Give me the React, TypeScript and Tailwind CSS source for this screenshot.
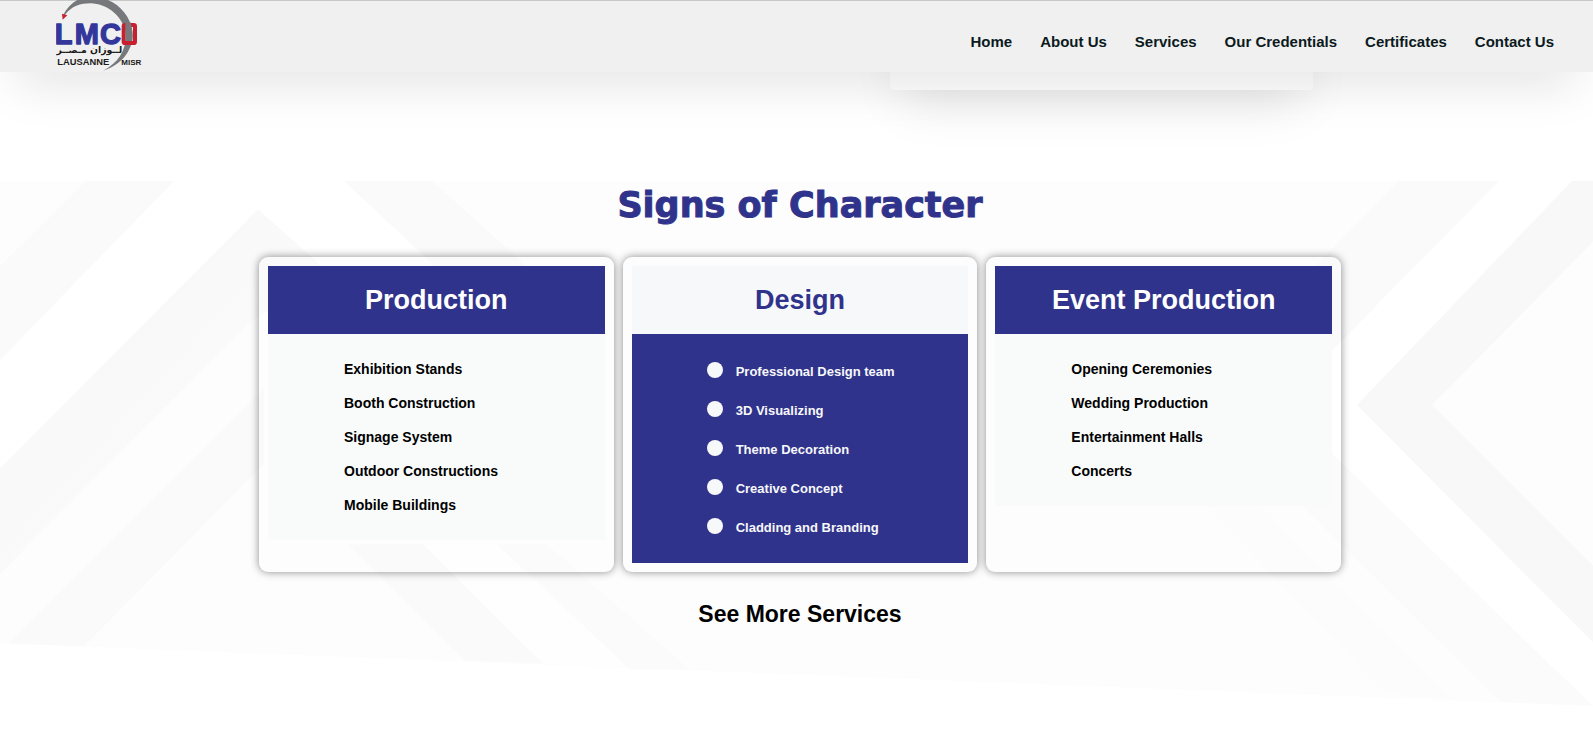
import clsx from "clsx";

type Service = {
  title: string;
  items: string[];
  highlighted?: boolean;
};

const navLinks = [
  "Home",
  "About Us",
  "Services",
  "Our Credentials",
  "Certificates",
  "Contact Us",
];

const services: Service[] = [
  {
    title: "Production",
    items: [
      "Exhibition Stands",
      "Booth Construction",
      "Signage System",
      "Outdoor Constructions",
      "Mobile Buildings",
    ],
  },
  {
    title: "Design",
    highlighted: true,
    items: [
      "Professional Design team",
      "3D Visualizing",
      "Theme Decoration",
      "Creative Concept",
      "Cladding and Branding",
    ],
  },
  {
    title: "Event Production",
    items: [
      "Opening Ceremonies",
      "Wedding Production",
      "Entertainment Halls",
      "Concerts",
    ],
  },
];

function Logo() {
  return (
    <svg
      viewBox="48 0 264 216"
      className="h-[72px] w-[88px]"
      role="img"
      aria-label="LMCO Lausanne Misr"
    >
      <g
        fill="#33379b"
        stroke="#33379b"
        strokeWidth="4"
        strokeLinejoin="round"
        fontFamily="'Liberation Sans', Arial, sans-serif"
        fontWeight="700"
        fontSize="87"
      >
        <text x="44" y="132">L</text>
        <text x="104" y="132">M</text>
        <text x="180" y="132">C</text>
      </g>
      <path
        d="M74 46 C94 18 122 10 152 10 C200 12 240 42 256 90 C264 140 240 186 190 212 C246 194 284 146 277 92 C268 34 216 -10 154 -10 C116 -10 86 12 70 44 Z"
        fill="#77787b"
      />
      <rect
        x="251"
        y="75"
        width="34"
        height="54"
        rx="4"
        fill="none"
        stroke="#c8202f"
        strokeWidth="12"
      />
      <path d="M256 66 H271 Q279 92 277 123 H257 Z" fill="#77787b" />
      <path d="M66 41 L82 46 L68 59 Z" fill="#c8202f" />
      <text
        x="148"
        y="159"
        textAnchor="middle"
        fontSize="28"
        fontWeight="700"
        fontFamily="'DejaVu Sans', sans-serif"
        fill="#1b1b1b"
      >
        لــوزان مـصــر
      </text>
      <g
        fontFamily="'Liberation Sans', Arial, sans-serif"
        fontWeight="700"
        fill="#1b1b1b"
      >
        <text x="52" y="195" fontSize="28">LAUSANNE</text>
        <text x="244" y="195" fontSize="24">MISR</text>
      </g>
    </svg>
  );
}

function Backdrop() {
  return (
    <svg
      viewBox="0 0 1593 526"
      preserveAspectRatio="none"
      className="absolute inset-0 h-full w-full"
      aria-hidden="true"
    >
      <defs>
        <linearGradient id="fadeLeft" x1="0" y1="0" x2="1" y2="1">
          <stop offset="0.3" stopColor="#f8f8f8" />
          <stop offset="0.75" stopColor="#fcfcfc" />
        </linearGradient>
      </defs>
      <path d="M0 0 H1593 V520 L0 458 Z" fill="#fdfdfd" />
      <path d="M174 0 H344 L427 77 H314 L258 28 L0 285 V177 Z" fill="#ffffff" />
      <path d="M0 85 L86 0 H174 L0 177 Z" fill="#fafafa" />
      <path d="M0 285 L258 28 L330 92 L251 139 L0 389 Z" fill="url(#fadeLeft)" />
      <path d="M8 458 L264 206 V280 L84 461 Z" fill="#fafafa" />
      <path d="M344 0 H432 L595 145 H500 Z" fill="#fafafa" />
      <path d="M348 360 H423 L543 478 L465 475 Z" fill="#fafafa" />
      <path d="M423 360 H497 L640 482 L543 478 Z" fill="#fefefe" />
      <path d="M497 360 H547 L690 484 H630 Z" fill="#fbfbfb" />
      <path d="M1499 0 H1572 L1357 222 L1593 457 V526 L1332 272 V168 Z" fill="#ffffff" />
      <path d="M1399 0 H1499 L1332 168 L1278 222 L1240 160 Z" fill="#fafafa" />
      <path d="M1240 222 H1282 L1593 520 L1500 516 L1200 222 Z" fill="#fbfbfb" />
      <path d="M1110 222 H1160 L1450 512 L1386 508 Z" fill="#fcfcfc" />
      <path d="M1572 0 H1593 V60 L1432 222 L1593 381 V457 L1357 222 Z" fill="#f8f8f8" />
    </svg>
  );
}

function ServiceCard({ title, items, highlighted = false }: Service) {
  return (
    <article className="rounded-[9px] p-[9px] shadow-[0_0_8px_rgba(0,0,0,0.45)]">
      <h3
        className={clsx(
          "flex h-[68px] items-center justify-center text-[27px] font-bold",
          highlighted ? "bg-[#f7f8fa] text-[#30338b]" : "bg-[#30338b] text-white",
        )}
      >
        {title}
      </h3>
      {highlighted ? (
        <ul className="bg-[#30338b] pt-[18px] pb-[16px] pl-[75px] text-[13px] font-bold text-[#f7f8fa]">
          {items.map((item) => (
            <li key={item} className="flex gap-[13px] leading-[39px]">
              <span className="mt-[10px] size-4 rounded-full bg-[#f7f8fa]" />
              {item}
            </li>
          ))}
        </ul>
      ) : (
        <ul className="bg-[#f9fbfa] py-[18px] pl-[76px] text-[14px] font-bold text-black">
          {items.map((item) => (
            <li key={item} className="leading-[34px]">
              {item}
            </li>
          ))}
        </ul>
      )}
    </article>
  );
}

export default function App() {
  return (
    <div className="min-h-screen overflow-x-hidden bg-white font-['Liberation_Sans',Arial,sans-serif]">
      <header className="relative z-10 flex h-[72px] items-center justify-between border-t border-[#c8c8c8] bg-[#f0f0f0] pr-[39px] pl-[56px] shadow-[0_26px_50px_-16px_rgba(0,0,0,0.13)]">
        <a href="#home" className="-mt-px">
          <Logo />
        </a>
        <nav className="flex gap-7 pt-[11px] text-[15px] font-bold text-[#0b1a20]">
          {navLinks.map((link) => (
            <a key={link} href="#">
              {link}
            </a>
          ))}
        </nav>
      </header>

      {/* bottom edge of the previous section's card, scrolled under the header */}
      <div className="flex h-[18px] items-end justify-end pr-[280px]">
        <div className="h-[90px] w-[423px] shrink-0 rounded-b-[4px] bg-white shadow-[0_25px_50px_-12px_rgba(0,0,0,0.1)]" />
      </div>

      <main className="relative mt-[91px] pb-[80px]">
        <Backdrop />
        <div className="relative mx-auto flex w-full max-w-[1089px] flex-col items-center pl-[7px]">
          <h2 className="font-['DejaVu_Sans',sans-serif] text-[35px] leading-[48px] font-bold text-[#30338b] [-webkit-text-stroke:1px_#30338b]">
            Signs of Character
          </h2>
          <div className="mt-[28px] grid w-full grid-cols-3 gap-[9px]">
            {services.map((service) => (
              <ServiceCard key={service.title} {...service} />
            ))}
          </div>
          <a href="#services" className="mt-[24px] text-[23px] leading-[36px] font-bold text-black">
            See More Services
          </a>
        </div>
      </main>
    </div>
  );
}
